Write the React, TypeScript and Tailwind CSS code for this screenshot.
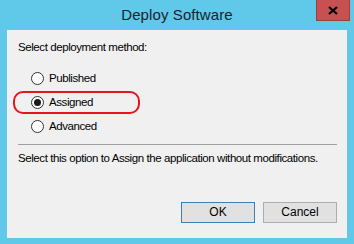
import React from "react";

function Radio({ checked }: { checked?: boolean }) {
  return (
    <span className="w-[13px] h-[13px] rounded-full border border-[#333333] bg-white flex items-center justify-center shrink-0">
      {checked && <span className="w-[7px] h-[7px] rounded-full bg-[#1a1a1a]" />}
    </span>
  );
}

export default function App() {
  const font = { fontFamily: '"Segoe UI", "Liberation Sans", Arial, sans-serif' };
  return (
    <div className="w-[354px] h-[244px] bg-[#60c8e8] flex flex-col" style={font}>
      <div className="relative h-[30px] flex items-center justify-center">
        <span className="text-[15px] text-[#1b2430] tracking-[0.1px]">Deploy Software</span>
        <div className="absolute right-[4px] top-0 w-[34px] h-[21px] bg-[#c75050] border border-[#a03c3c] border-t-0 flex items-center justify-center">
          <svg width="10" height="9" viewBox="0 0 10 9">
            <path d="M1 1 L9 8 M9 1 L1 8" stroke="#000" strokeWidth="2.2" />
          </svg>
        </div>
      </div>
      <div className="mx-[7px] mb-[6px] flex-1 bg-[#f0f0f0] flex flex-col px-[11px] text-[11.5px] tracking-[-0.42px] text-black leading-[15px]">
        <div className="mt-[10px]">Select deployment method:</div>
        <div className="relative mt-[11px] flex flex-col pl-[13px]">
          <div className="h-[24px] flex items-center gap-[5px]">
            <Radio />
            <span>Published</span>
          </div>
          <div className="h-[24px] flex items-center gap-[5px]">
            <Radio checked />
            <span>Assigned</span>
          </div>
          <div className="h-[24px] flex items-center gap-[5px]">
            <Radio />
            <span>Advanced</span>
          </div>
          <div className="absolute left-[-5px] top-[25px] w-[127px] h-[23px] border-2 border-[#e8141c] rounded-[10px]" />
        </div>
        <div className="mt-[6px] h-px bg-[#a0a0a0] mr-[-1px]" />
        <div className="mt-[6px] whitespace-nowrap">Select this option to Assign the application without modifications.</div>
        <div className="flex-1" />
        <div className="flex justify-end gap-[8px] mb-[15px] mr-[-1px] tracking-normal">
          <button className="w-[74px] h-[21px] bg-[#e1e1e1] border border-[#3c7fb1] text-[12px]">OK</button>
          <button className="w-[74px] h-[21px] bg-[#e1e1e1] border border-[#adadad] text-[12px]">Cancel</button>
        </div>
      </div>
    </div>
  );
}
